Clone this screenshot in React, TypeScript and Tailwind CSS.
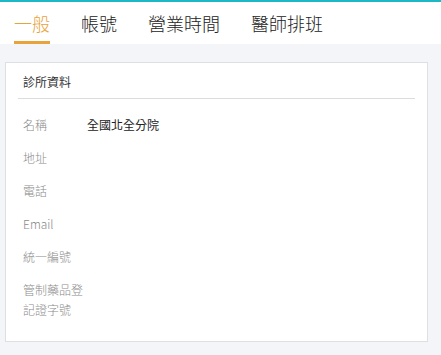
const tabs = ["一般", "帳號", "營業時間", "醫師排班"];

const fields = [
  { label: "名稱", value: "全國北全分院" },
  { label: "地址", value: "" },
  { label: "電話", value: "" },
  { label: "Email", value: "" },
  { label: "統一編號", value: "" },
  { label: "管制藥品登記證字號", value: "" },
];

export default function App() {
  return (
    <div
      className="w-[441px] h-[355px] bg-[#f4f5f9] overflow-hidden"
      style={{ fontFamily: '"Noto Sans CJK TC", "Noto Sans", sans-serif' }}
    >
      <div className="h-[2px] bg-[#1cb8c6]" />
      {/* Tabs */}
      <div className="bg-white h-[42px] flex items-end pl-[14px] gap-[31px]">
        {tabs.map((t, i) => (
          <div
            key={t}
            className={
              i === 0
                ? "h-full flex flex-col justify-between text-[18px] font-light text-[#e9a33b] leading-none pt-[12px]"
                : "h-full flex flex-col justify-between text-[18px] font-light text-[#222] leading-none pt-[12px]"
            }
          >
            <span>{t}</span>
            <span className={i === 0 ? "block h-[3px] bg-[#e9a33b]" : "block h-[3px]"} />
          </div>
        ))}
      </div>

      {/* Card */}
      <div className="ml-[5px] mr-[13px] mt-[18px] h-[280px] bg-white border border-[#dedfe3] px-[12px]">
        <div className="h-[36px] flex items-center pl-[5px] pt-[2px] text-[12px] text-[#333] border-b border-[#dcdcdc]">
          診所資料
        </div>
        <div className="pl-[5px] pt-[16px] flex flex-col gap-[13px]">
          {fields.map((f) => (
            <div key={f.label} className="flex text-[12px] leading-[20px]">
              <div className="w-[64px] text-[#8a8a8a] font-light">{f.label}</div>
              <div className="text-[#222]">{f.value}</div>
            </div>
          ))}
        </div>
      </div>
    </div>
  );
}
